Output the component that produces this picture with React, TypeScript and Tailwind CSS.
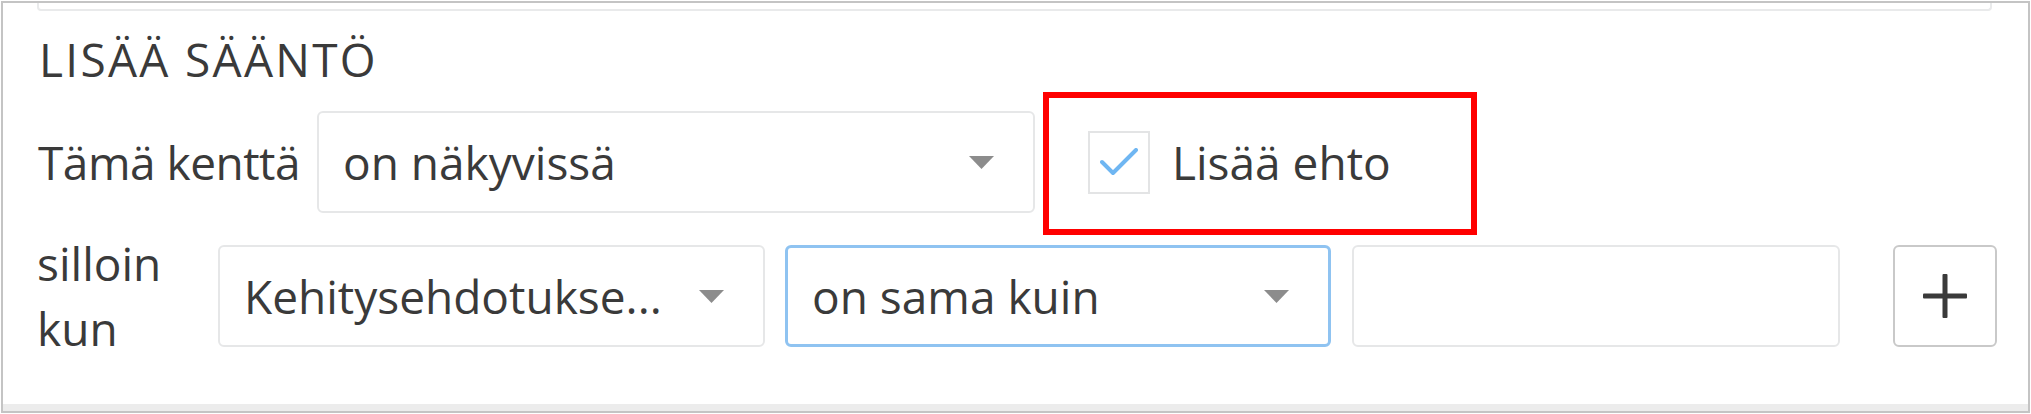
import React from 'react';

/**
 * Rule editor panel - "LISÄÄ SÄÄNTÖ"
 * One visibility rule row plus a condition row
 */

const FONT = "font-['Open_Sans','Noto_Sans',sans-serif]";

function SelectArrow() {
  return (
    <svg width="25" height="13" viewBox="0 0 25 13" className="shrink-0">
      <path d="M0 0 H25 L12.5 13 Z" fill="#8c8c8c" />
    </svg>
  );
}

type FakeSelectProps = {
  value: string;
  width: string;
  focused?: boolean;
};

function FakeSelect({ value, width, focused }: FakeSelectProps) {
  return (
    <div
      className={`${width} flex h-[102px] shrink-0 items-center justify-between bg-white pl-[24px] pr-[39px] ${
        focused ? 'rounded-md border-[3px] border-[#8fc3f1]' : 'rounded-md border-2 border-[#e6e7e8]'
      }`}
    >
      <span className="whitespace-nowrap leading-[56px]">{value}</span>
      <SelectArrow />
    </div>
  );
}

export default function App() {
  return (
    <div className={`${FONT} h-[414px] bg-white pl-px pt-px text-[46px] text-[#3a3a3a]`}>
      <div className="relative flex h-[412px] w-[2029px] flex-col border-2 border-[#c4c4c4] bg-white">
        {/* Bottom of the previous field */}
        <div className="ml-[34px] mr-[36px] h-[8px] rounded-b border-x-2 border-b-2 border-[#e9eaeb]" />

        {/* Header */}
        <h2 className="ml-[36px] mt-[20px] leading-[56px] tracking-[2.3px]">LISÄÄ SÄÄNTÖ</h2>

        {/* Rule row */}
        <div className="mt-[24px] flex items-center pl-[35px]">
          <span className="w-[279px] shrink-0 whitespace-nowrap leading-[56px] tracking-[-0.5px]">Tämä kenttä</span>
          <FakeSelect value="on näkyvissä" width="w-[718px]" />
          <div className="ml-[53px] flex items-center">
            <div className="flex h-[63px] w-[62px] items-center justify-center border-2 border-[#e3e4e5] bg-white">
              <svg width="38" height="28" viewBox="0 0 38 28">
                <path
                  d="M2 14 L13 25 L36 2"
                  fill="none"
                  stroke="#6fb6f2"
                  strokeWidth="4"
                  strokeLinecap="round"
                  strokeLinejoin="round"
                />
              </svg>
            </div>
            <span className="ml-[22px] whitespace-nowrap leading-[56px]">Lisää ehto</span>
          </div>
        </div>

        {/* Condition row */}
        <div className="mt-[18px] flex items-center pl-[34px]">
          <span className="w-[181px] shrink-0 pr-[20px] leading-[65px]">silloin kun</span>
          <FakeSelect value="Kehitysehdotukse..." width="w-[547px]" />
          <div className="ml-[20px]">
            <FakeSelect value="on sama kuin" width="w-[546px]" focused />
          </div>
          <div className="ml-[21px] h-[102px] w-[488px] shrink-0 rounded-md border-2 border-[#e6e7e8] bg-white" />
          <button className="ml-[53px] flex h-[102px] w-[104px] shrink-0 items-center justify-center rounded-md border-2 border-[#c9c9c9] bg-white">
            <svg width="44" height="44" viewBox="0 0 44 44">
              <rect x="0" y="19.5" width="44" height="5" rx="1" fill="#3a3a3a" />
              <rect x="19.5" y="0" width="5" height="44" rx="1" fill="#3a3a3a" />
            </svg>
          </button>
        </div>

        {/* Bottom strip */}
        <div className="mt-auto h-[7px] bg-[#ececec]" />

        {/* Annotation frame */}
        <div className="pointer-events-none absolute left-[1040px] top-[89px] h-[143px] w-[434px] border-[6px] border-[#ff0000]" />
      </div>
    </div>
  );
}
